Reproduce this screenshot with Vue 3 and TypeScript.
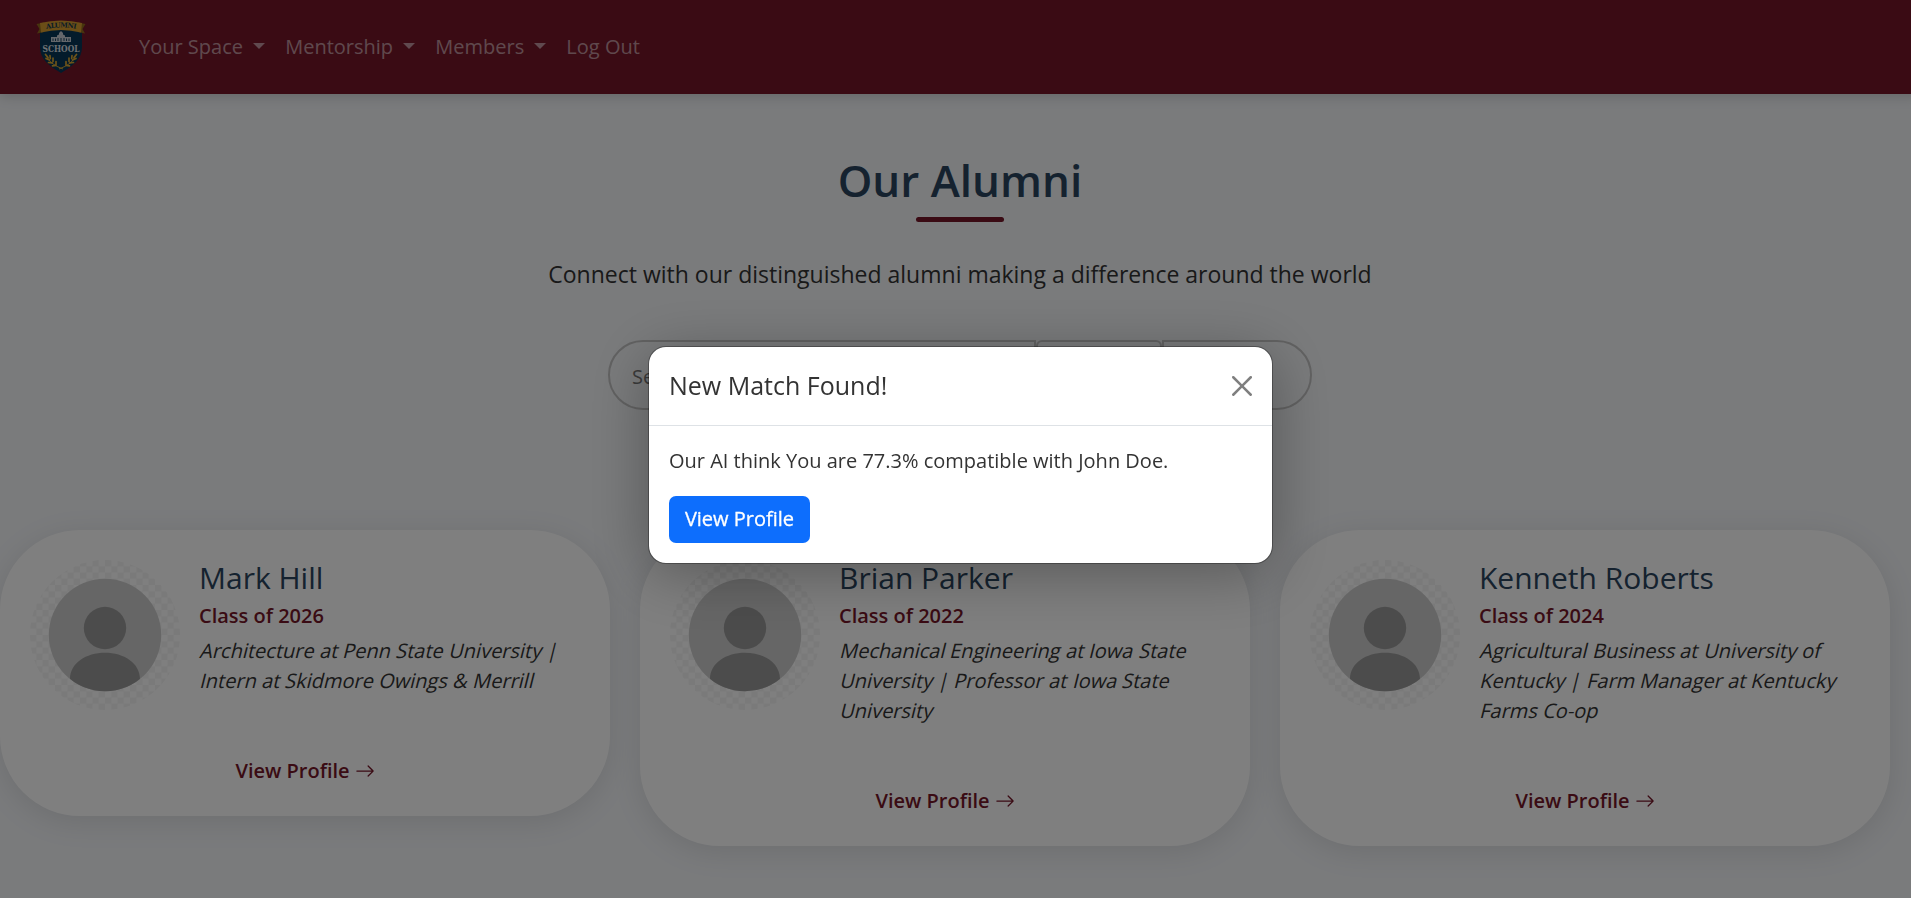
<script setup lang="ts">
interface Alum {
  name: string
  year: number
  bio: string
}

interface MenuItem {
  label: string
  dropdown: boolean
}

const menu: MenuItem[] = [
  { label: 'Your Space', dropdown: true },
  { label: 'Mentorship', dropdown: true },
  { label: 'Members', dropdown: true },
  { label: 'Log Out', dropdown: false },
]

const alumni: Alum[] = [
  { name: 'Mark Hill', year: 2026, bio: 'Architecture at Penn State University | Intern at Skidmore Owings & Merrill' },
  { name: 'Brian Parker', year: 2022, bio: 'Mechanical Engineering at Iowa State University | Professor at Iowa State University' },
  { name: 'Kenneth Roberts', year: 2024, bio: 'Agricultural Business at University of Kentucky | Farm Manager at Kentucky Farms Co-op' },
]
</script>

<template>
  <div class="page">
    <nav class="navbar">
      <svg class="logo" viewBox="0 0 50 56">
        <path d="M5 10H47V28C47 40 38 47 26 54C14 47 5 40 5 28Z" fill="#073656" />
        <path d="M1.500 5L9 3.500V13L2 14.500L4.500 10Z M50.500 5L43 3.500V13L50 14.500L47.500 10Z" fill="#8f6a1c" />
        <path d="M5 4Q26 -1 47 4L46 13.500Q26 8.500 6 13.500Z" fill="#d69c2e" />
        <path id="arc" d="M10 10.200Q26 6.700 43 10.200" fill="none" />
        <text class="logo-top" textLength="30"><textPath href="#arc" startOffset="1.300">ALUMNI</textPath></text>
        <path d="M16 23V18H22V16.500L24 15.500V14L26 12L28 14V15.500L30 16.500V18H36V23Z" fill="#c9cfd6" />
        <path d="M18 19.500V22M20.500 19.500V22M23 19V22M29 19V22M31.500 19.500V22M34 19.500V22M26 19V23" stroke="#073656" stroke-width=".9" />
        <text x="26" y="32.800" text-anchor="middle" textLength="37" lengthAdjust="spacingAndGlyphs" class="logo-name">SCHOOL</text>
        <path d="M11 36Q14 45 28 50M41 36Q38 45 24 50" fill="none" stroke="#d9a632" stroke-width=".9" />
        <path d="M10.500 35.500l2.500 3M11 39.500l3.500 1.500M13.500 43.500l3.500 .3M17.500 46.800l3.500 -.5M15 36.500l.3 3M18 39l0 3.500M21 42.500l0 3M41.500 35.500l-2.500 3M41 39.500l-3.500 1.500M38.500 43.500l-3.500 .3M34.500 46.800l-3.500 -.5M37 36.500l-.3 3M34 39l0 3.500M31 42.500l0 3" stroke="#d9a632" stroke-width="1.700" stroke-linecap="round" />
      </svg>
      <ul class="menu">
        <li v-for="item in menu" :key="item.label">
          {{ item.label }}<span v-if="item.dropdown" class="caret"></span>
        </li>
      </ul>
    </nav>

    <main class="content">
      <h1>Our Alumni</h1>
      <div class="rule"></div>
      <p class="lead">Connect with our distinguished alumni making a difference around the world</p>
      <form class="search">
        <input class="query" type="text" placeholder="Search" />
        <div class="filter"></div>
        <div class="submit"></div>
      </form>

      <section class="cards">
        <article v-for="a in alumni" :key="a.name" class="card">
          <div class="top">
            <svg class="avatar" viewBox="0 0 150 150">
              <defs>
                <pattern id="checks" width="12.500" height="12.500" patternUnits="userSpaceOnUse">
                  <rect width="12.500" height="12.500" fill="#fff" />
                  <path d="M0 0h6.250v6.250h-6.250z M6.250 6.250h6.250v6.250h-6.250z" fill="#f4f4f4" />
                </pattern>
                <clipPath id="disc"><circle cx="75" cy="75" r="56.200" /></clipPath>
              </defs>
              <circle cx="75" cy="75" r="75" fill="url(#checks)" />
              <circle cx="75" cy="75" r="56.200" fill="#cdcdcd" />
              <g clip-path="url(#disc)" fill="#999">
                <circle cx="75" cy="68" r="21.200" />
                <path d="M40 118V119C40 103 56 92.700 75 92.700S110 103 110 119V135H40Z" />
              </g>
            </svg>
            <div class="info">
              <h3>{{ a.name }}</h3>
              <p class="year">Class of {{ a.year }}</p>
              <p class="bio">
                <template v-for="(word, i) in a.bio.split(' ')" :key="i"><span>{{ word }}</span>{{ ' ' }}</template>
              </p>
            </div>
          </div>
          <a class="link">View Profile
            <svg viewBox="0 0 16 16"><path fill-rule="evenodd" d="M1 8a.5.5 0 0 1 .5-.5h11.793l-3.147-3.146a.5.5 0 0 1 .708-.708l4 4a.5.5 0 0 1 0 .708l-4 4a.5.5 0 0 1-.708-.708L13.293 8.500H1.500A.5.5 0 0 1 1 8" fill="currentColor" /></svg>
          </a>
        </article>
      </section>
    </main>
  </div>

  <div class="backdrop">
    <div class="modal">
      <header class="modal-head">
        <h5>New Match Found!</h5>
        <svg class="close" viewBox="0 0 16 16"><path d="M.293.293a1 1 0 0 1 1.414 0L8 6.586 14.293.293a1 1 0 1 1 1.414 1.414L9.414 8l6.293 6.293a1 1 0 0 1-1.414 1.414L8 9.414l-6.293 6.293a1 1 0 0 1-1.414-1.414L6.586 8 .293 1.707a1 1 0 0 1 0-1.414" /></svg>
      </header>
      <div class="modal-body">
        <p>Our AI think You are 77.3% compatible with John Doe.</p>
        <button type="button">View Profile</button>
      </div>
    </div>
  </div>
</template>

<style>
html, body { margin: 0; overflow: hidden; }
</style>

<style scoped>
* { box-sizing: border-box; }
h1, h3, h5, p, ul { margin: 0; padding: 0; }
.page {
  width: 1920px;
  height: 898px;
  overflow: hidden;
  background: #f4f6f9;
  color: #333;
  font: 400 20px/30px "Open Sans", "Noto Sans", sans-serif;
}
.navbar {
  display: flex;
  align-items: center;
  height: 94px;
  padding-left: 35px;
  background: #751628;
  box-shadow: 0 2px 12px rgba(0, 0, 0, .18);
  position: relative;
}
.logo { width: 50px; height: 56px; margin-right: 44px; overflow: visible; }
.logo-top { font: 700 6.800px "DejaVu Serif", serif; fill: #123a50; }
.logo-name { font: 700 9px "DejaVu Serif", serif; fill: #dfe3e8; }
.menu { display: flex; list-style: none; color: rgba(255, 255, 255, .55); }
.menu li { padding: 0 10px; white-space: nowrap; }
.caret {
  display: inline-block;
  margin-left: 10.200px;
  vertical-align: 5px;
  border: 6px solid transparent;
  border-top-color: currentColor;
  border-bottom: 0;
}
.content { display: flex; flex-direction: column; align-items: center; padding-top: 59px; }
h1 { color: #2b455e; font-size: 44px; font-weight: 600; line-height: 54px; }
.rule { width: 88px; height: 5px; margin-top: 10px; border-radius: 3px; background: #751628; }
.lead { margin-top: 34px; font-size: 23px; line-height: 36px; }
.search { display: flex; width: 704px; height: 70px; margin-top: 48px; }
.search > * { border: 2px solid #c4c4c4; background: transparent; }
.query {
  width: 428px;
  padding: 2px 22px 0;
  border-radius: 38px 0 0 38px;
  font: 20px "Open Sans", "Noto Sans", sans-serif;
}
.filter { width: 126px; border-radius: 6px; }
.submit { flex: 1; border-radius: 0 38px 38px 0; }
.cards { display: flex; align-items: flex-start; gap: 30px; width: 1920px; margin-top: 120px; }
.card {
  display: flex;
  flex-direction: column;
  align-items: center;
  width: 610px;
  padding: 30px;
  border-radius: 80px;
  background: #fff;
  box-shadow: 0 6px 30px rgba(0, 0, 0, .1);
}
.top { display: flex; align-self: stretch; gap: 19px; }
.avatar { flex: none; width: 150px; height: 150px; }
.info { padding-bottom: 15px; }
h3 { color: #2b455e; font-size: 30px; font-weight: 400; line-height: 36px; }
.year { margin-top: 5px; color: #751628; font-weight: 600; }
.bio { margin-top: 5px; }
.bio span { display: inline-block; transform: skewX(-14deg); transform-origin: 0 22px; }
.link { display: flex; align-items: center; gap: 5px; margin-top: 45px; color: #751628; font-weight: 600; }
.link svg { width: 20px; height: 20px; }
.backdrop {
  position: fixed;
  inset: 0;
  display: flex;
  align-items: flex-start;
  justify-content: center;
  padding: 346px 0 0 10px;
  background: rgba(0, 0, 0, .5);
  color: #333;
  font: 400 20px/30px "Open Sans", "Noto Sans", sans-serif;
}
.modal {
  width: 625px;
  height: 218px;
  border: 1px solid rgba(0, 0, 0, .3);
  border-radius: 18px;
  background: #fff;
  background-clip: padding-box;
  box-shadow: 0 10px 60px rgba(0, 0, 0, .3);
}
.modal-head {
  display: flex;
  align-items: center;
  justify-content: space-between;
  height: 79px;
  padding: 0 20px;
  border-bottom: 1px solid #dee2e6;
}
h5 { font-size: 25px; font-weight: 400; padding-bottom: 3px; }
.close { width: 20px; height: 20px; fill: #7f7f7f; }
.modal-body { padding: 20px; }
.modal-body button {
  display: block;
  margin-top: 20px;
  width: 141px;
  height: 47px;
  padding: 0 0 2px;
  border: 0;
  border-radius: 7px;
  background: #0d6efd;
  color: #fff;
  font: 500 20px "Open Sans", "Noto Sans", sans-serif;
  -webkit-text-stroke: .3px #fff;
}
</style>
